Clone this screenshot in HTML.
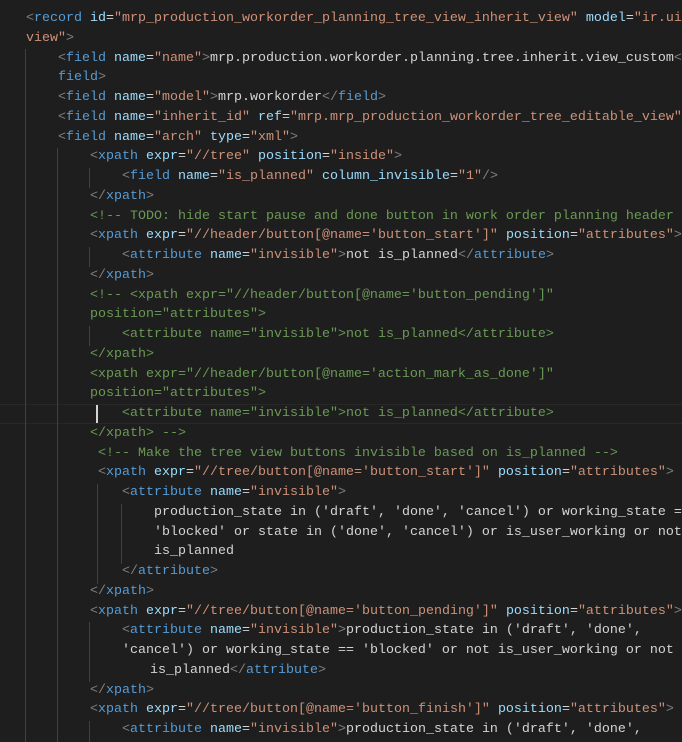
<!DOCTYPE html>
<html><head><meta charset="utf-8"><style>
html,body{margin:0;padding:0;background:#1e1e1e;width:682px;height:742px;overflow:hidden}
body{position:relative;font-family:"Liberation Mono",monospace;font-size:13.33px;color:#d4d4d4}
#w{position:absolute;left:0;top:2px;width:682px;height:742px}
.l{position:absolute;white-space:pre;height:19.75px;line-height:19.75px}
.p{color:#808080}.t{color:#569cd6}.a{color:#9cdcfe}.s{color:#ce9178}.c{color:#6a9955}
.g{position:absolute;width:1px;background:#404040}
.hl{position:absolute;left:0;width:682px;height:18px;border-top:1px solid #282828;border-bottom:1px solid #282828}
</style></head><body><div id="w">
<div class="hl" style="top:402px"></div>
<div class="g" style="left:25px;top:47px;height:695px"></div>
<div class="g" style="left:57px;top:146px;height:596px"></div>
<div class="g" style="left:89px;top:166px;height:20px"></div>
<div class="g" style="left:89px;top:245px;height:20px"></div>
<div class="g" style="left:89px;top:324px;height:20px"></div>
<div class="g" style="left:97px;top:482px;height:100px"></div>
<div class="g" style="left:121px;top:502px;height:60px"></div>
<div class="g" style="left:89px;top:620px;height:60px"></div>
<div class="g" style="left:89px;top:719px;height:23px"></div>
<div style="position:absolute;left:96px;top:403px;width:2px;height:18px;background:#d4d4d4"></div>

<div class="l" style="top:7px;left:26px"><span class="p">&lt;</span><span class="t">record</span> <span class="a">id</span>=<span class="s">"mrp_production_workorder_planning_tree_view_inherit_view"</span> <span class="a">model</span>=<span class="s">"ir.ui</span></div>
<div class="l" style="top:26.75px;left:26px"><span class="s">view"</span><span class="p">&gt;</span></div>
<div class="l" style="top:46.5px;left:58px"><span class="p">&lt;</span><span class="t">field</span> <span class="a">name</span>=<span class="s">"name"</span><span class="p">&gt;</span>mrp.production.workorder.planning.tree.inherit.view_custom<span class="p">&lt;/</span></div>
<div class="l" style="top:66.25px;left:58px"><span class="t">field</span><span class="p">&gt;</span></div>
<div class="l" style="top:86px;left:58px"><span class="p">&lt;</span><span class="t">field</span> <span class="a">name</span>=<span class="s">"model"</span><span class="p">&gt;</span>mrp.workorder<span class="p">&lt;/</span><span class="t">field</span><span class="p">&gt;</span></div>
<div class="l" style="top:105.75px;left:58px"><span class="p">&lt;</span><span class="t">field</span> <span class="a">name</span>=<span class="s">"inherit_id"</span> <span class="a">ref</span>=<span class="s">"mrp.mrp_production_workorder_tree_editable_view"</span><span class="p">/&gt;</span></div>
<div class="l" style="top:125.5px;left:58px"><span class="p">&lt;</span><span class="t">field</span> <span class="a">name</span>=<span class="s">"arch"</span> <span class="a">type</span>=<span class="s">"xml"</span><span class="p">&gt;</span></div>
<div class="l" style="top:145.25px;left:90px"><span class="p">&lt;</span><span class="t">xpath</span> <span class="a">expr</span>=<span class="s">"//tree"</span> <span class="a">position</span>=<span class="s">"inside"</span><span class="p">&gt;</span></div>
<div class="l" style="top:165px;left:122px"><span class="p">&lt;</span><span class="t">field</span> <span class="a">name</span>=<span class="s">"is_planned"</span> <span class="a">column_invisible</span>=<span class="s">"1"</span><span class="p">/&gt;</span></div>
<div class="l" style="top:184.75px;left:90px"><span class="p">&lt;/</span><span class="t">xpath</span><span class="p">&gt;</span></div>
<div class="l c" style="top:204.5px;left:90px">&lt;!-- TODO: hide start pause and done button in work order planning header --&gt;</div>
<div class="l" style="top:224.25px;left:90px"><span class="p">&lt;</span><span class="t">xpath</span> <span class="a">expr</span>=<span class="s">"//header/button[@name='button_start']"</span> <span class="a">position</span>=<span class="s">"attributes"</span><span class="p">&gt;</span></div>
<div class="l" style="top:244px;left:122px"><span class="p">&lt;</span><span class="t">attribute</span> <span class="a">name</span>=<span class="s">"invisible"</span><span class="p">&gt;</span>not is_planned<span class="p">&lt;/</span><span class="t">attribute</span><span class="p">&gt;</span></div>
<div class="l" style="top:263.75px;left:90px"><span class="p">&lt;/</span><span class="t">xpath</span><span class="p">&gt;</span></div>
<div class="l c" style="top:283.5px;left:90px">&lt;!-- &lt;xpath expr="//header/button[@name='button_pending']"</div>
<div class="l c" style="top:303.25px;left:90px">position="attributes"&gt;</div>
<div class="l c" style="top:323px;left:122px">&lt;attribute name="invisible"&gt;not is_planned&lt;/attribute&gt;</div>
<div class="l c" style="top:342.75px;left:90px">&lt;/xpath&gt;</div>
<div class="l c" style="top:362.5px;left:90px">&lt;xpath expr="//header/button[@name='action_mark_as_done']"</div>
<div class="l c" style="top:382.25px;left:90px">position="attributes"&gt;</div>
<div class="l c" style="top:402px;left:122px">&lt;attribute name="invisible"&gt;not is_planned&lt;/attribute&gt;</div>
<div class="l c" style="top:421.75px;left:90px">&lt;/xpath&gt; --&gt;</div>
<div class="l c" style="top:441.5px;left:98px">&lt;!-- Make the tree view buttons invisible based on is_planned --&gt;</div>
<div class="l" style="top:461.25px;left:98px"><span class="p">&lt;</span><span class="t">xpath</span> <span class="a">expr</span>=<span class="s">"//tree/button[@name='button_start']"</span> <span class="a">position</span>=<span class="s">"attributes"</span><span class="p">&gt;</span></div>
<div class="l" style="top:481px;left:122px"><span class="p">&lt;</span><span class="t">attribute</span> <span class="a">name</span>=<span class="s">"invisible"</span><span class="p">&gt;</span></div>
<div class="l" style="top:500.75px;left:154px">production_state in ('draft', 'done', 'cancel') or working_state ==</div>
<div class="l" style="top:520.5px;left:154px">'blocked' or state in ('done', 'cancel') or is_user_working or not</div>
<div class="l" style="top:540.25px;left:154px">is_planned</div>
<div class="l" style="top:560px;left:122px"><span class="p">&lt;/</span><span class="t">attribute</span><span class="p">&gt;</span></div>
<div class="l" style="top:579.75px;left:90px"><span class="p">&lt;/</span><span class="t">xpath</span><span class="p">&gt;</span></div>
<div class="l" style="top:599.5px;left:90px"><span class="p">&lt;</span><span class="t">xpath</span> <span class="a">expr</span>=<span class="s">"//tree/button[@name='button_pending']"</span> <span class="a">position</span>=<span class="s">"attributes"</span><span class="p">&gt;</span></div>
<div class="l" style="top:619.25px;left:122px"><span class="p">&lt;</span><span class="t">attribute</span> <span class="a">name</span>=<span class="s">"invisible"</span><span class="p">&gt;</span>production_state in ('draft', 'done',</div>
<div class="l" style="top:639px;left:122px">'cancel') or working_state == 'blocked' or not is_user_working or not</div>
<div class="l" style="top:658.75px;left:150px">is_planned<span class="p">&lt;/</span><span class="t">attribute</span><span class="p">&gt;</span></div>
<div class="l" style="top:678.5px;left:90px"><span class="p">&lt;/</span><span class="t">xpath</span><span class="p">&gt;</span></div>
<div class="l" style="top:698.25px;left:90px"><span class="p">&lt;</span><span class="t">xpath</span> <span class="a">expr</span>=<span class="s">"//tree/button[@name='button_finish']"</span> <span class="a">position</span>=<span class="s">"attributes"</span><span class="p">&gt;</span></div>
<div class="l" style="top:718px;left:122px"><span class="p">&lt;</span><span class="t">attribute</span> <span class="a">name</span>=<span class="s">"invisible"</span><span class="p">&gt;</span>production_state in ('draft', 'done',</div>
</div></body></html>
